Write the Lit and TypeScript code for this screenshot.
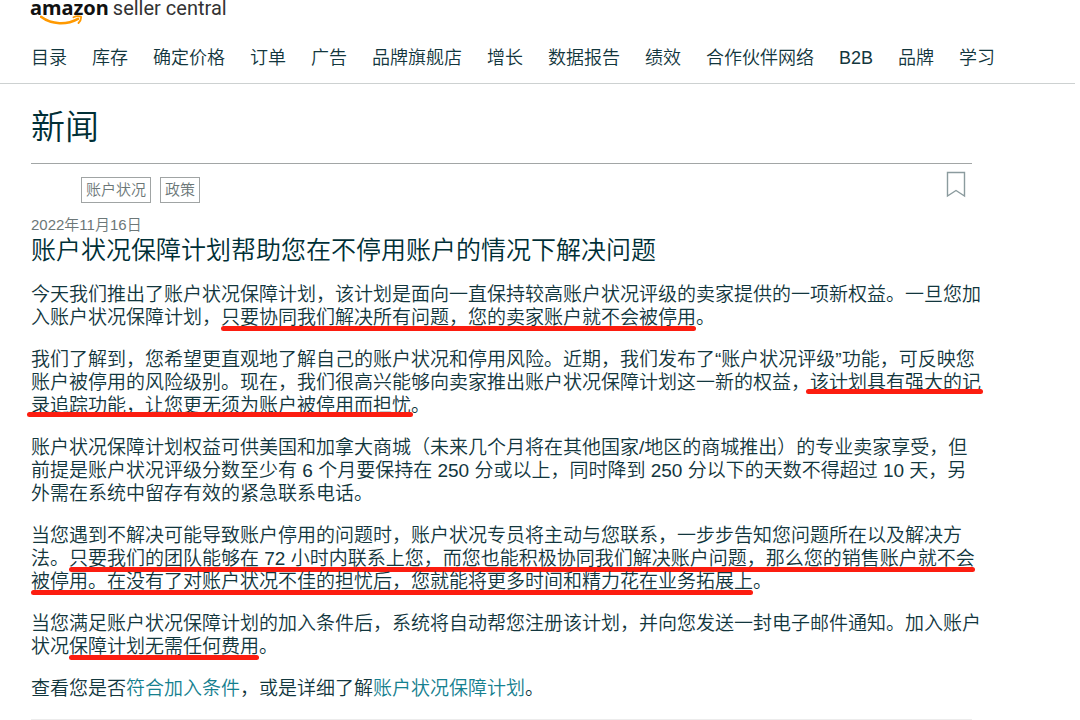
import { LitElement, html, css } from "lit";
import { customElement } from "lit/decorators.js";

const NAV = [
  "目录", "库存", "确定价格", "订单", "广告", "品牌旗舰店", "增长",
  "数据报告", "绩效", "合作伙伴网络", "B2B", "品牌", "学习",
];

@customElement("seller-header")
export class SellerHeader extends LitElement {
  static styles = css`
    :host {
      display: block;
      margin-right: 5px;
      border-bottom: 1px solid #cdd1d1;
    }
    .brand {
      display: block;
      width: max-content;
      height: 33px;
      margin-left: 30px;
      color: #111;
      text-decoration: none;
      line-height: 16px;
      white-space: nowrap;
    }
    .words {
      display: flex;
      align-items: baseline;
      gap: 4px;
      height: 15px;
    }
    .amazon {
      font-family: "Noto Sans", sans-serif;
      font-size: 20px;
      font-weight: 700;
    }
    .central {
      font-family: Roboto, sans-serif;
      font-size: 20px;
      font-weight: 400;
      color: #333;
    }
    .smile {
      display: block;
      margin-left: 10px;
    }
    .nav {
      display: flex;
      align-items: center;
      gap: 25px;
      height: 50px;
      padding-left: 31px;
      white-space: nowrap;
    }
    .item {
      color: #12363d;
      text-decoration: none;
      font-size: 18px;
      line-height: 24px;
    }
  `;

  render() {
    return html`
      <a class="brand" href="#" aria-label="amazon seller central">
        <span class="words">
          <span class="amazon">amazon</span>
          <span class="central">seller central</span>
        </span>
        <svg class="smile" width="44" height="11" viewBox="0 0 44 11" aria-hidden="true">
          <path d="M1 1.800C12 10 27 10 38 3.800" fill="none" stroke="#f90" stroke-width="2.600" stroke-linecap="round" />
          <path d="M33.500 2.300C36 0.900 39 0.900 41 1.700C41.400 4 40 6.500 38.500 8" fill="none" stroke="#f90" stroke-width="1.800" stroke-linecap="round" stroke-linejoin="round" />
        </svg>
      </a>
      <nav class="nav" aria-label="主导航">
        ${NAV.map((label) => html`<a class="item" href="#">${label}</a>`)}
      </nav>
    `;
  }
}

@customElement("app-root")
export class AppRoot extends LitElement {
  static styles = css`
    :host {
      display: block;
      min-height: 100vh;
      overflow: hidden;
      background: #fff;
      color: #12363d;
      font-family: "Liberation Sans", "Noto Sans CJK SC", sans-serif;
      font-weight: 350;
    }
    .page {
      max-width: 941px;
      padding: 0 31px;
    }
    .title {
      margin: 0;
      padding: 23px 0 16px;
      border-bottom: 1px solid #a2a6a6;
      color: #002f36;
      font-size: 34px;
      font-weight: inherit;
      line-height: 40px;
    }
    .meta {
      display: flex;
      justify-content: space-between;
      padding: 7px 6px 0 50px;
    }
    .tags {
      display: flex;
      gap: 9px;
      padding-top: 6px;
    }
    .tag {
      padding: 0 4px;
      border: 1px solid #a0a4a4;
      color: #6c7778;
      text-decoration: none;
      font-size: 15px;
      line-height: 24px;
    }
    .save {
      display: block;
      height: 27px;
      padding: 0;
      border: 0;
      background: none;
      cursor: pointer;
    }
    .flag {
      display: block;
    }
    .date {
      display: block;
      margin-top: 12px;
      color: #6c7778;
      font-size: 15px;
      line-height: 20px;
    }
    .headline {
      margin: 0 0 18px;
      color: #002f36;
      font-size: 25px;
      font-weight: inherit;
      line-height: 30px;
    }
    .text {
      margin: 0 0 19px;
      font-size: 19px;
      line-height: 23px;
      white-space: nowrap;
    }
    .mark {
      position: relative;
      display: inline-block;
    }
    .mark::after {
      content: "";
      position: absolute;
      right: 0;
      bottom: -2px;
      left: 0;
      height: 5px;
      border-radius: 3px;
      background: #fc1d10;
    }
    .mark.tight::after {
      right: -2px;
      bottom: 0;
      left: -4px;
    }
    .link {
      color: #15808f;
      text-decoration: none;
    }
    .end {
      height: 1px;
      margin: 0;
      border: 0;
      background: #ececec;
    }
  `;

  render() {
    return html`
      <seller-header></seller-header>
      <main class="page" lang="zh-CN">
        <h1 class="title">新闻</h1>
        <article>
          <div class="meta">
            <div class="tags">
              <a class="tag" href="#">账户状况</a>
              <a class="tag" href="#">政策</a>
            </div>
            <button class="save" type="button" aria-label="收藏">
              <svg class="flag" width="20" height="27" viewBox="0 0 20 27" aria-hidden="true">
                <path d="M1.500 1.500H18.500V25L10 19.500L1.500 25Z" fill="none" stroke="#8b9b9e" stroke-width="1.400" />
              </svg>
            </button>
          </div>
          <time class="date" datetime="2022-11-16">2022年11月16日</time>
          <h2 class="headline">账户状况保障计划帮助您在不停用账户的情况下解决问题</h2>
          <p class="text">今天我们推出了账户状况保障计划，该计划是面向一直保持较高账户状况评级的卖家提供的一项新权益。一旦您加<br />入账户状况保障计划，<span class="mark">只要协同我们解决所有问题，您的卖家账户就不会被停用</span>。</p>
          <p class="text">我们了解到，您希望更直观地了解自己的账户状况和停用风险。近期，我们发布了“账户状况评级”功能，可反映您<br />账户被停用的风险级别。现在，我们很高兴能够向卖家推出账户状况保障计划这一新的权益，<span class="mark tight">该计划具有强大的记</span><br /><span class="mark tight">录追踪功能，让您更无须为账户被停用而担忧</span>。</p>
          <p class="text">账户状况保障计划权益可供美国和加拿大商城（未来几个月将在其他国家/地区的商城推出）的专业卖家享受，但<br />前提是账户状况评级分数至少有 6 个月要保持在 250 分或以上，同时降到 250 分以下的天数不得超过 10 天，另<br />外需在系统中留存有效的紧急联系电话。</p>
          <p class="text">当您遇到不解决可能导致账户停用的问题时，账户状况专员将主动与您联系，一步步告知您问题所在以及解决方<br />法。<span class="mark">只要我们的团队能够在 72 小时内联系上您，而您也能积极协同我们解决账户问题，那么您的销售账户就不会</span><br /><span class="mark">被停用。在没有了对账户状况不佳的担忧后，您就能将更多时间和精力花在业务拓展上</span>。</p>
          <p class="text">当您满足账户状况保障计划的加入条件后，系统将自动帮您注册该计划，并向您发送一封电子邮件通知。加入账户<br />状况<span class="mark">保障计划无需任何费用</span>。</p>
          <p class="text">查看您是否<a class="link" href="#">符合加入条件</a>，或是详细了解<a class="link" href="#">账户状况保障计划</a>。</p>
        </article>
        <hr class="end" />
      </main>
    `;
  }
}
